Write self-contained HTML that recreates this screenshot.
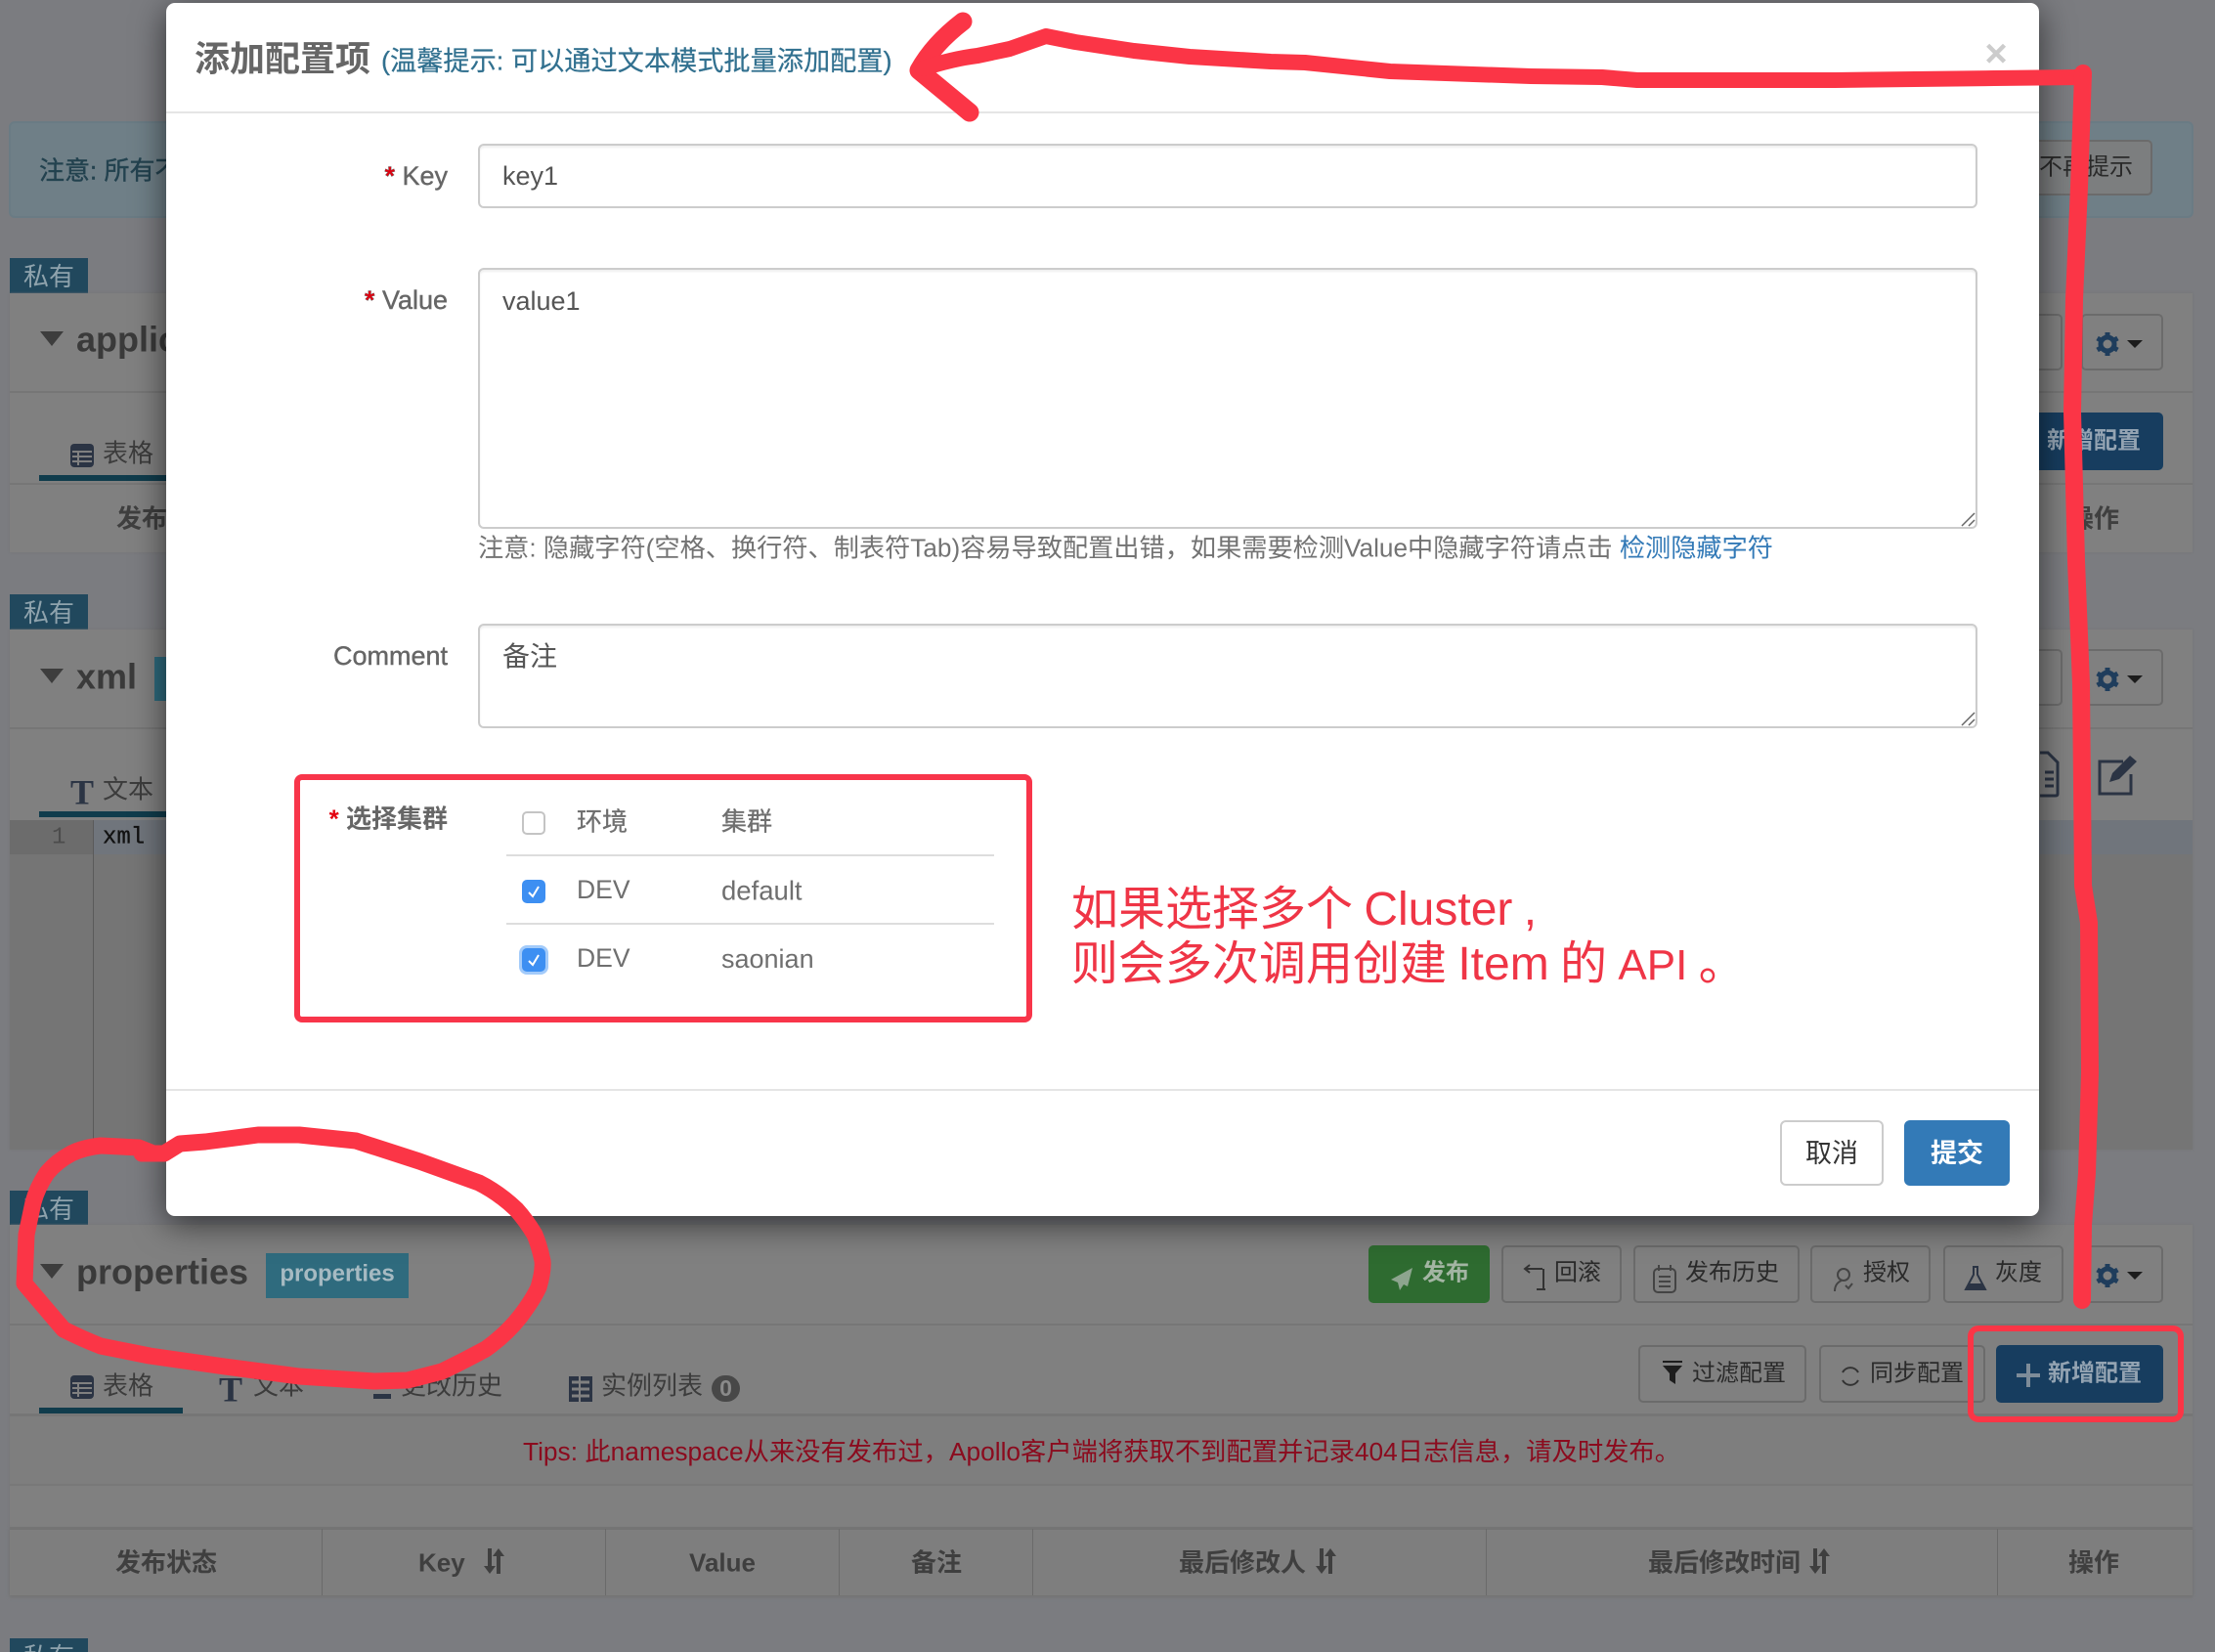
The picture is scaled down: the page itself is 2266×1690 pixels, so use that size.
<!DOCTYPE html>
<html lang="zh"><head><meta charset="utf-8"><title>添加配置项</title>
<style>
html,body{margin:0;padding:0}
body{width:2266px;height:1690px;position:relative;overflow:hidden;background:#7b7c80;font-family:"Liberation Sans","Noto Sans CJK SC",sans-serif;color:#333}
div,span,svg{box-sizing:border-box}
.a{position:absolute}
.t{position:absolute;white-space:nowrap;transform:translateY(calc(-50% + 1px));line-height:1.2}
.r{position:absolute;white-space:nowrap;transform:translate(-100%,calc(-50% + 1px));line-height:1.2}
.c{position:absolute;white-space:nowrap;transform:translate(-50%,calc(-50% + 1px));line-height:1.2}
.tag{position:absolute;left:10px;width:80px;background:#21485d;color:#8fa3ad;font-size:26px;text-align:center;line-height:38px;height:36px}
.panel{position:absolute;left:10px;width:2233px;background:#808080;box-shadow:0 0 2px #747474}
.ln{position:absolute;background:#767676;height:2px}
.btn{position:absolute;border:2px solid #6b6b6b;border-radius:5px;background:#808080;color:#2a2a2a;font-size:24px;display:block}
.bt{font-size:24px;color:#2a2a2a}
.ttl{font-size:36px;color:#3a3a3a;font-weight:bold}
.tab{font-size:26px;color:#3c3c3c}
.th{font-size:26px;color:#3f3f3f;font-weight:bold}
.ul{position:absolute;left:40px;width:147px;height:6px;background:#103c4c}
.tri{position:absolute;width:0;height:0;border-left:12px solid transparent;border-right:12px solid transparent;border-top:15px solid #3d3d3d}
.caret{position:absolute;width:0;height:0;border-left:8px solid transparent;border-right:8px solid transparent;border-top:8px solid #1c1c1c}
.modal{position:absolute;left:170px;top:3px;width:1916px;height:1241px;background:#fff;border-radius:9px;box-shadow:0 8px 34px rgba(0,0,0,.6)}
.inp{position:absolute;left:489px;width:1534px;background:#fff;border:2px solid #ccc;border-radius:6px;box-shadow:inset 0 2px 2px rgba(0,0,0,.07)}
.lb{font-size:27px;color:#666;-webkit-text-stroke:.4px #666}
.lbb{font-size:26px;color:#666;font-weight:bold}
.st{color:#e3000f;font-weight:bold}
.val{font-size:27px;color:#555}
.cell{font-size:27px;color:#6f6f6f}
.cb{position:absolute;left:534px;width:24px;height:24px;border-radius:5px;background:#3d8ff2}
.dv{position:absolute;height:2px;background:#ddd;left:518px;width:499px}
.m{position:absolute;height:2px;background:#e5e5e5;left:170px;width:1916px}
.red{font-size:48px;color:#ef3546;word-spacing:-2px}
</style></head><body>

<!-- alert -->
<div class="a" style="left:9px;top:124px;width:2235px;height:99px;background:#6f7f87;border:2px solid #6a7b84;border-radius:6px"></div>
<div class="t" style="left:40px;top:174px;font-size:26px;color:#23424f;-webkit-text-stroke:.4px #23424f">注意: 所有不</div>
<div class="btn" style="left:2000px;top:143px;width:202px;height:57px;background:#7c7e7f"></div>
<div class="t bt" style="left:2086px;top:171px">不再提示</div>

<!-- panel 1 -->
<div class="tag" style="top:264px">私有</div>
<div class="panel" style="top:300px;height:265px"></div>
<div class="ln" style="left:10px;top:400px;width:2233px"></div>
<div class="tri" style="left:41px;top:339px"></div>
<div class="t ttl" style="left:78px;top:346px">applic</div>
<svg class="a" style="left:72px;top:454px" width="24" height="24" viewBox="0 0 24 24"><rect width="24" height="24" rx="4" fill="#2b3444"/><path d="M2 8h20M2 13h20M2 18h20M8 8v14" stroke="#808080" stroke-width="2"/></svg>
<div class="t tab" style="left:105px;top:463px">表格</div>
<div class="ul" style="top:486px"></div>
<div class="ln" style="left:10px;top:494px;width:2233px"></div>
<div class="t th" style="left:119px;top:530px">发布</div>
<div class="btn" style="left:2000px;top:321px;width:110px;height:58px"></div>
<div class="btn" style="left:2129px;top:321px;width:84px;height:58px"></div>
<svg class="a" style="left:2142px;top:338px" width="28" height="28" viewBox="0 0 28 28"><circle cx="14" cy="14" r="7" fill="none" stroke="#1f3d5c" stroke-width="5"/><path d="M14 2v5M14 21v5M3.6 8l4.4 2.5M20 17.5l4.4 2.5M3.6 20l4.4-2.5M20 10.5L24.400 8" stroke="#1f3d5c" stroke-width="5"/></svg>
<div class="caret" style="left:2176px;top:348px"></div>
<div class="btn" style="left:2000px;top:422px;width:213px;height:59px;background:#173d5f;border-color:#173d5f"></div>
<div class="t" style="left:2094px;top:451px;font-size:24px;color:#94a4b3;font-weight:bold">新增配置</div>
<div class="c th" style="left:2142px;top:530px">操作</div>

<!-- panel 2 -->
<div class="tag" style="top:608px">私有</div>
<div class="panel" style="top:644px;height:532px"></div>
<div class="ln" style="left:10px;top:744px;width:2233px"></div>
<div class="tri" style="left:41px;top:684px"></div>
<div class="t ttl" style="left:78px;top:691px">xml</div>
<div class="a" style="left:158px;top:672px;width:30px;height:45px;background:#2f6b7e"></div>
<div class="btn" style="left:2000px;top:664px;width:110px;height:58px"></div>
<div class="btn" style="left:2129px;top:664px;width:84px;height:58px"></div>
<svg class="a" style="left:2142px;top:681px" width="28" height="28" viewBox="0 0 28 28"><circle cx="14" cy="14" r="7" fill="none" stroke="#1f3d5c" stroke-width="5"/><path d="M14 2v5M14 21v5M3.6 8l4.4 2.5M20 17.5l4.4 2.500M3.6 20l4.4-2.5M20 10.5L24.400 8" stroke="#1f3d5c" stroke-width="5"/></svg>
<div class="caret" style="left:2176px;top:691px"></div>
<div class="t" style="left:72px;top:810px;font-family:'Liberation Serif',serif;font-size:36px;font-weight:bold;color:#2b3444">T</div>
<div class="t tab" style="left:105px;top:807px">文本</div>
<div class="ul" style="top:830px"></div>
<svg class="a" style="left:2087px;top:768px" width="20" height="48" viewBox="0 0 20 48"><path d="M0 2h8l10 10v32q0 2-2 2H0M5 22h9M5 29h9M5 36h9" fill="none" stroke="#2b3444" stroke-width="3"/></svg>
<svg class="a" style="left:2146px;top:770px" width="44" height="44" viewBox="0 0 44 44"><path d="M26 9H2v33h32V22" fill="none" stroke="#2b3444" stroke-width="3"/><path d="M12 30l3-9L33 3l7 6-18 18z" fill="#2b3444"/></svg>
<div class="a" style="left:10px;top:839px;width:2233px;height:337px;background:#757575"></div>
<div class="a" style="left:10px;top:839px;width:2233px;height:35px;background:#70757c"></div>
<div class="a" style="left:10px;top:839px;width:85px;height:35px;background:#6c6c6c"></div>
<div class="a" style="left:95px;top:839px;width:1px;height:337px;background:#5a5a5a"></div>
<div class="t" style="left:53px;top:857px;font-family:'Liberation Mono',monospace;font-size:24px;color:#4c4c4c">1</div>
<div class="t" style="left:105px;top:857px;font-family:'Liberation Mono',monospace;font-size:24px;color:#111;-webkit-text-stroke:.3px #111">xml</div>

<!-- panel 3 -->
<div class="tag" style="top:1218px">私有</div>
<div class="panel" style="top:1253px;height:379px"></div>
<div class="ln" style="left:10px;top:1354px;width:2233px"></div>
<div class="tri" style="left:41px;top:1293px"></div>
<div class="t ttl" style="left:78px;top:1300px">properties</div>
<div class="a" style="left:272px;top:1282px;width:146px;height:46px;background:#2f6b7e"></div>
<div class="c" style="left:345px;top:1303px;font-size:24px;color:#a6bac2;font-weight:bold">properties</div>

<div class="btn" style="left:1400px;top:1274px;width:124px;height:59px;background:#2e6b30;border-color:#2e6b30"></div>
<svg class="a" style="left:1422px;top:1296px" width="24" height="24" viewBox="0 0 24 24"><path d="M23 1L1 13l7 3 2 8 4-6 4 2z" fill="#8da58e"/></svg>
<div class="t" style="left:1455px;top:1302px;font-size:24px;color:#a3b5a3;font-weight:bold">发布</div>
<div class="btn" style="left:1536px;top:1274px;width:123px;height:59px"></div>
<svg class="a" style="left:1558px;top:1293px" width="24" height="28" viewBox="0 0 24 28"><path d="M23 26h-9M20 5H2M7 1L2 5l5 4M21 5v21" fill="none" stroke="#333" stroke-width="2"/></svg>
<div class="t bt" style="left:1590px;top:1302px">回滚</div>
<div class="btn" style="left:1671px;top:1274px;width:170px;height:59px"></div>
<svg class="a" style="left:1691px;top:1293px" width="24" height="30" viewBox="0 0 24 30"><rect x="1" y="5" width="22" height="24" rx="4" fill="none" stroke="#444" stroke-width="2"/><path d="M6 1v6M18 1v6M6 13h12M6 18h12M6 23h12" stroke="#444" stroke-width="2"/></svg>
<div class="t bt" style="left:1724px;top:1302px">发布历史</div>
<div class="btn" style="left:1852px;top:1274px;width:123px;height:59px"></div>
<svg class="a" style="left:1875px;top:1296px" width="22" height="26" viewBox="0 0 22 26"><circle cx="11" cy="8" r="6" fill="none" stroke="#444" stroke-width="2"/><path d="M9 14C4 16 2 20 2 25M13 19l3 3 4-5" fill="none" stroke="#444" stroke-width="2"/></svg>
<div class="t bt" style="left:1906px;top:1302px">授权</div>
<div class="btn" style="left:1988px;top:1274px;width:123px;height:59px"></div>
<svg class="a" style="left:2009px;top:1295px" width="24" height="26" viewBox="0 0 24 26"><path d="M9 1h6M10 1v8L2 24h20L14 9V1" fill="none" stroke="#2b3444" stroke-width="2"/><path d="M6 18h12l3 6H3z" fill="#2b3444"/></svg>
<div class="t bt" style="left:2041px;top:1302px">灰度</div>
<div class="btn" style="left:2129px;top:1274px;width:84px;height:59px"></div>
<svg class="a" style="left:2142px;top:1291px" width="28" height="28" viewBox="0 0 28 28"><circle cx="14" cy="14" r="7" fill="none" stroke="#1f3d5c" stroke-width="5"/><path d="M14 2v5M14 21v5M3.6 8l4.4 2.5M20 17.5l4.4 2.500M3.6 20l4.4-2.5M20 10.5L24.400 8" stroke="#1f3d5c" stroke-width="5"/></svg>
<div class="caret" style="left:2176px;top:1301px"></div>

<svg class="a" style="left:72px;top:1407px" width="24" height="24" viewBox="0 0 24 24"><rect width="24" height="24" rx="4" fill="#2b3444"/><path d="M2 8h20M2 13h20M2 18h20M8 8v14" stroke="#808080" stroke-width="2"/></svg>
<div class="t tab" style="left:105px;top:1417px">表格</div>
<div class="t" style="left:224px;top:1421px;font-family:'Liberation Serif',serif;font-size:36px;font-weight:bold;color:#2b3444">T</div>
<div class="t tab" style="left:259px;top:1417px">文本</div>
<svg class="a" style="left:381px;top:1418px" width="20" height="14" viewBox="0 0 20 14"><path d="M1 8h18v5H1z" fill="#2b3444"/></svg>
<div class="t tab" style="left:410px;top:1417px">更改历史</div>
<svg class="a" style="left:582px;top:1408px" width="24" height="26" viewBox="0 0 24 26"><rect x="0" y="0" width="10" height="26" fill="#2b3444"/><rect x="12" y="0" width="12" height="26" fill="#2b3444"/><path d="M3 6h18M3 13h18M3 20h18" stroke="#808080" stroke-width="3"/></svg>
<div class="t tab" style="left:615px;top:1417px">实例列表</div>
<div class="a" style="left:728px;top:1407px;width:29px;height:27px;border-radius:14px;background:#484848;color:#8a8a8a;font-size:23px;font-weight:bold;text-align:center;line-height:27px">0</div>
<div class="ul" style="top:1440px"></div>
<div class="ln" style="left:10px;top:1446px;width:2233px;height:3px"></div>

<div class="btn" style="left:1676px;top:1376px;width:172px;height:59px"></div>
<svg class="a" style="left:1700px;top:1391px" width="22" height="26" viewBox="0 0 22 26"><path d="M1 1h20v2H1zM1 6h20l-7 8v11l-6-4v-7z" fill="#1d1d1d"/></svg>
<div class="t bt" style="left:1731px;top:1405px">过滤配置</div>
<div class="btn" style="left:1861px;top:1376px;width:170px;height:59px"></div>
<svg class="a" style="left:1882px;top:1396px" width="22" height="24" viewBox="0 0 22 24"><path d="M3 8a9 9 0 0 1 16 0M19 16a9 9 0 0 1-16 0" fill="none" stroke="#333" stroke-width="2"/></svg>
<div class="t bt" style="left:1913px;top:1405px">同步配置</div>
<div class="btn" style="left:2042px;top:1376px;width:171px;height:59px;background:#173d5f;border-color:#173d5f"></div>
<svg class="a" style="left:2063px;top:1394px" width="24" height="26" viewBox="0 0 24 26"><path d="M12 1v24M0 13h24" stroke="#7e8c99" stroke-width="4"/></svg>
<div class="t" style="left:2095px;top:1405px;font-size:24px;color:#93a3b2;font-weight:bold">新增配置</div>

<div class="a" style="left:10px;top:1449px;width:2233px;height:71px;background:#7e7e7e;border-bottom:2px solid #787878"></div>
<div class="t" style="left:535px;top:1485px;font-size:26.3px;color:#8b0b1e">Tips: 此namespace从来没有发布过，Apollo客户端将获取不到配置并记录404日志信息，请及时发布。</div>

<div class="a" style="left:10px;top:1562px;width:2233px;height:70px;background:#7e7e7e;border-top:3px solid #747474;box-shadow:0 2px 3px #747474"></div>
<div class="a" style="left:329px;top:1564px;width:1px;height:68px;background:#6a6a6a"></div>
<div class="a" style="left:619px;top:1564px;width:1px;height:68px;background:#6a6a6a"></div>
<div class="a" style="left:858px;top:1564px;width:1px;height:68px;background:#6a6a6a"></div>
<div class="a" style="left:1056px;top:1564px;width:1px;height:68px;background:#6a6a6a"></div>
<div class="a" style="left:1520px;top:1564px;width:1px;height:68px;background:#6a6a6a"></div>
<div class="a" style="left:2043px;top:1564px;width:1px;height:68px;background:#6a6a6a"></div>
<div class="c th" style="left:170px;top:1598px">发布状态</div>
<div class="t th" style="left:428px;top:1598px">Key</div>
<svg class="a" style="left:493px;top:1583px" width="26" height="28" viewBox="0 0 26 28"><path d="M8 1v22M17 27V5" stroke="#3f3f3f" stroke-width="4"/><path d="M2 19h12l-6 8zM11 9h12l-6-8z" fill="#3f3f3f"/></svg>
<div class="c th" style="left:739px;top:1598px">Value</div>
<div class="c th" style="left:958px;top:1598px">备注</div>
<div class="t th" style="left:1206px;top:1598px">最后修改人</div>
<svg class="a" style="left:1344px;top:1583px" width="26" height="28" viewBox="0 0 26 28"><path d="M8 1v22M17 27V5" stroke="#3f3f3f" stroke-width="4"/><path d="M2 19h12l-6 8zM11 9h12l-6-8z" fill="#3f3f3f"/></svg>
<div class="t th" style="left:1686px;top:1598px">最后修改时间</div>
<svg class="a" style="left:1849px;top:1583px" width="26" height="28" viewBox="0 0 26 28"><path d="M8 1v22M17 27V5" stroke="#3f3f3f" stroke-width="4"/><path d="M2 19h12l-6 8zM11 9h12l-6-8z" fill="#3f3f3f"/></svg>
<div class="c th" style="left:2142px;top:1598px">操作</div>
<div class="tag" style="top:1676px;height:14px;overflow:hidden">私有</div>

<!-- modal -->
<div class="modal"></div>
<div class="t" style="left:199px;top:59px;font-size:36px;color:#666;font-weight:bold">添加配置项</div>
<div class="t" style="left:390px;top:62px;font-size:27.2px;color:#31708f;-webkit-text-stroke:.2px #31708f">(温馨提示: 可以通过文本模式批量添加配置)</div>
<div class="c" style="left:2042px;top:54px;font-size:40px;color:#ccc;font-weight:bold">×</div>
<div class="m" style="top:114px"></div>

<div class="r lb" style="left:458px;top:179px"><span class="st">*</span> Key</div>
<div class="inp" style="top:147px;height:66px"></div>
<div class="t val" style="left:514px;top:179px">key1</div>

<div class="r lb" style="left:458px;top:306px"><span class="st">*</span> Value</div>
<div class="inp" style="top:274px;height:267px"></div>
<div class="t val" style="left:514px;top:307px">value1</div>
<svg class="a" style="left:2004px;top:522px" width="18" height="18" viewBox="0 0 18 18"><path d="M3 16L16 3M10 16l6-6" stroke="#666" stroke-width="1.5"/></svg>
<div class="t" style="left:489px;top:560px;font-size:26.2px;color:#737373">注意: 隐藏字符(空格、换行符、制表符Tab)容易导致配置出错，如果需要检测Value中隐藏字符请点击 <span style="color:#337ab7">检测隐藏字符</span></div>

<div class="r lb" style="left:458px;top:670px">Comment</div>
<div class="inp" style="top:638px;height:107px"></div>
<div class="t" style="left:514px;top:671px;font-size:28px;color:#555">备注</div>
<svg class="a" style="left:2004px;top:726px" width="18" height="18" viewBox="0 0 18 18"><path d="M3 16L16 3M10 16l6-6" stroke="#666" stroke-width="1.5"/></svg>

<div class="a" style="left:301px;top:792px;width:755px;height:254px;border:6px solid #f8354a;border-radius:8px"></div>
<div class="r lbb" style="left:458px;top:837px"><span class="st">*</span> 选择集群</div>
<div class="a" style="left:534px;top:830px;width:24px;height:24px;border:2px solid #c4c4c4;border-radius:5px;background:#fff"></div>
<div class="t cell" style="left:590px;top:840px;font-size:26px;-webkit-text-stroke:.3px #6f6f6f">环境</div>
<div class="t cell" style="left:738px;top:840px;font-size:26px;-webkit-text-stroke:.3px #6f6f6f">集群</div>
<div class="dv" style="top:874px"></div>
<div class="cb" style="top:900px"></div>
<svg class="a" style="left:534px;top:900px" width="24" height="24" viewBox="0 0 24 24"><path d="M7 13l4 4 6-10" fill="none" stroke="#fff" stroke-width="2"/></svg>
<div class="t cell" style="left:590px;top:910px;font-size:26.5px">DEV</div>
<div class="t cell" style="left:738px;top:910px;font-size:27.5px">default</div>
<div class="dv" style="top:944px"></div>
<div class="cb" style="top:970px;box-shadow:0 0 0 3px #a3cbfa"></div>
<svg class="a" style="left:534px;top:970px" width="24" height="24" viewBox="0 0 24 24"><path d="M7 13l4 4 6-10" fill="none" stroke="#fff" stroke-width="2"/></svg>
<div class="t cell" style="left:590px;top:980px;font-size:26.5px">DEV</div>
<div class="t cell" style="left:738px;top:980px">saonian</div>

<div class="t red" style="left:1096px;top:930px">如果选择多个 Cluster ,</div>
<div class="t red" style="left:1096px;top:986px">则会多次调用创建 Item 的 <span style="font-size:44px">API</span> 。</div>

<div class="m" style="top:1114px"></div>
<div class="a" style="left:1821px;top:1146px;width:106px;height:67px;border:2px solid #ccc;border-radius:6px;background:#fff"></div>
<div class="c" style="left:1874px;top:1179px;font-size:27px;color:#333">取消</div>
<div class="a" style="left:1948px;top:1146px;width:108px;height:67px;border-radius:6px;background:#337ab7"></div>
<div class="c" style="left:2002px;top:1179px;font-size:27px;color:#fff;font-weight:bold">提交</div>

<!-- hand-drawn annotations -->
<svg class="a" style="left:0;top:0" width="2266" height="1690" viewBox="0 0 2266 1690" fill="none" stroke="#fb3546" stroke-width="16" stroke-linecap="round" stroke-linejoin="round">
<path d="M985 22Q955 45 940 72L992 115" stroke-width="19"/>
<path d="M944 70Q975 60 1000 57L1033 50L1070 37L1100 43L1160 52L1217 58L1300 63L1335 64L1422 73L1566 78L1639 79L1675 82L1877 82L2040 80L2130 79"/>
<path d="M2131 75L2127 191L2122 306L2120 421L2124 574L2129 700L2131 906L2137 944L2138 1097L2135 1200L2131 1253L2130 1330" stroke-width="18"/>
<path d="M157 1180L142 1174L103 1172Q85 1174 73 1180Q58 1188 48 1200Q38 1215 34 1230L27 1263L25 1313L42 1333L65 1360Q85 1370 103 1377L153 1387L230 1398L306 1408L383 1413L417 1412L452 1403Q475 1392 497 1380Q518 1365 532 1347Q545 1330 551 1317Q556 1300 555 1290Q552 1275 547 1263Q538 1248 528 1237Q510 1220 490 1210L429 1188L364 1167L306 1161H264L210 1168L184 1170L168 1180H145" stroke-width="17"/>
<rect x="2016" y="1359" width="215" height="93" rx="8" stroke-width="6"/>
</svg>
</body></html>
